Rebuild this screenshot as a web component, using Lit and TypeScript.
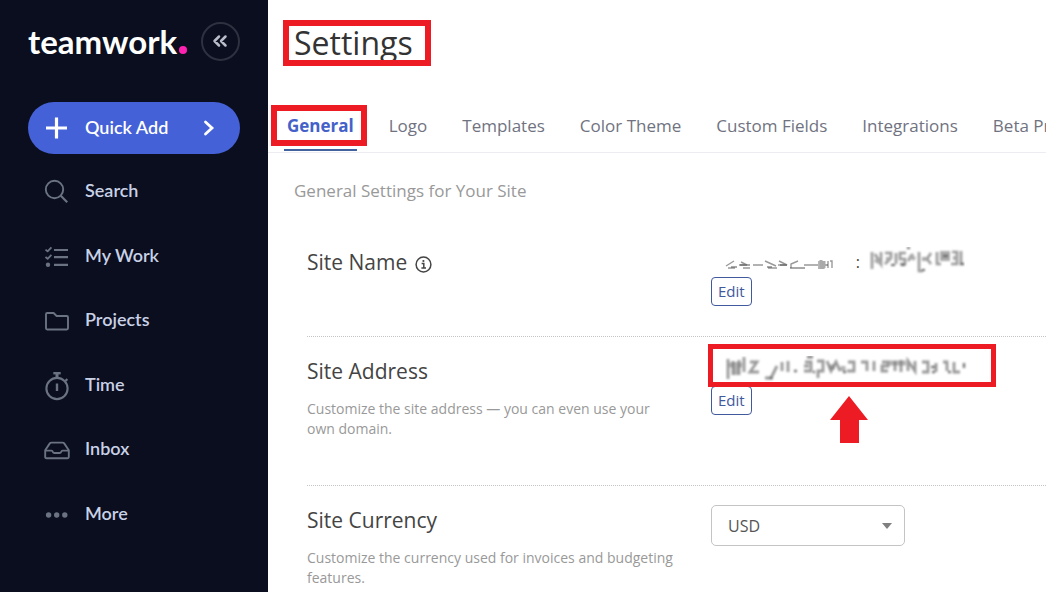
import { LitElement, html, css, svg, nothing, type TemplateResult } from "lit";
import { customElement, property, state } from "lit/decorators.js";
import { classMap } from "lit/directives/class-map.js";

const icons: Record<string, TemplateResult> = {
  search: svg`<circle cx="10.5" cy="10.5" r="8.7"/><path d="M16.8 16.8 23.2 23.2" stroke-width="2.2"/>`,
  work: svg`<path d="M1.5 5.6 3.6 7.4 7.4 3.4M1.5 13 3.6 14.8 7.4 10.8" stroke-width="1.8"/>
    <path d="M10 6H24M10 13.2H24M10 20.8H24" stroke-width="2.2"/>
    <circle cx="4" cy="20.8" r="2.2" fill="currentColor" stroke="none"/>`,
  projects: svg`<path d="M3.2 5H9.6L12.6 8H22.8Q24 8 24 9.2V20.3Q24 21.5 22.8 21.5H3.2Q2 21.5 2 20.3V6.2Q2 5 3.2 5Z"/>`,
  time: svg`<circle cx="13" cy="15.500" r="10.6" stroke-width="2.1"/><path d="M13 10.500V18" stroke-width="2.4"/>
    <path d="M9.3 .2H16.7" stroke-width="2.4"/><path d="M13 .5V5" stroke-width="3"/><path d="M21.3 8 23.4 6.2" stroke-width="2.2"/>`,
  inbox: svg`<path d="M1.2 13.2 5.8 6.4Q6.4 5.6 7.4 5.6H18.6Q19.6 5.6 20.2 6.4L24.8 13.2V20Q24.8 21.2 23.6 21.2H2.4Q1.2 21.2 1.2 20Z"/>
    <path d="M1.4 13.6H7.4Q8.4 13.6 8.7 14.6 9 16 10.2 16H15.8Q17 16 17.3 14.6 17.6 13.6 18.6 13.6H24.6"/>`,
  more: svg`<g fill="currentColor" stroke="none"><circle cx="4.6" cy="13" r="2.7"/><circle cx="12.7" cy="13" r="2.7"/><circle cx="20.8" cy="13" r="2.7"/></g>`,
};

@customElement("side-bar")
export class SideBar extends LitElement {
  static styles = css`
    :host {
      display: block;
      background: #0a0e1e;
      padding: 22px 28px 24px;
      font-family: Lato, "Open Sans", sans-serif;
      box-sizing: border-box;
    }
    .brand { display: flex; align-items: center; justify-content: space-between; height: 38px; }
    .logo { display: flex; align-items: baseline; color: #fff; font-size: 33px; line-height: 38px; font-weight: 700; text-decoration: none; }
    .dot { width: 8px; height: 8px; border-radius: 50%; background: #ff22b1; margin-left: 2px; }
    .toggle { width: 39px; height: 39px; border-radius: 50%; border: 2px solid #2d3140; background: none; color: #b9bdc9; padding: 0 2px 0 0; display: grid; place-items: center; }
    .add {
      display: flex; align-items: center; width: 100%; height: 52px; margin: 42px 0 5px; padding: 0 24px 0 17px;
      border: 0; border-radius: 26px; background: #4461d7; color: #fff; font: 600 18px/24px Lato, sans-serif; text-align: left;
    }
    .label { flex: 1; margin-left: 17px; padding-bottom: 2px; }
    ul { display: grid; grid-auto-rows: 1fr; height: 387px; list-style: none; margin: 0; padding: 0 0 0 16px; }
    .item { display: flex; align-items: center; gap: 15px; height: 100%; color: #c9d1e6; font-size: 18px; line-height: 24px; font-weight: 600; text-decoration: none; }
    .text { padding-bottom: 2px; }
    .icon { width: 26px; height: 28px; overflow: visible; color: #6b7282; fill: none; stroke: currentColor; stroke-width: 1.9; stroke-linejoin: round; }
  `;

  private items = [
    ["search", "Search"],
    ["work", "My Work"],
    ["projects", "Projects"],
    ["time", "Time"],
    ["inbox", "Inbox"],
    ["more", "More"],
  ];

  render() {
    return html`
      <div class="brand">
        <a class="logo" href="#home">teamwork<span class="dot"></span></a>
        <button class="toggle" aria-label="Collapse sidebar">
          <svg width="16" height="14" viewBox="0 0 16 14" fill="none" stroke="currentColor" stroke-width="2.5" stroke-linecap="round" stroke-linejoin="round"><path d="M7 2.500 2.500 7 7 11.500M13.500 2.500 9 7 13.500 11.500"/></svg>
        </button>
      </div>
      <button class="add">
        <svg width="23" height="22" viewBox="0 0 23 22" fill="none" stroke="#fff" stroke-width="3.2"><path d="M11.5 .5V21.5M1 11H22"/></svg>
        <span class="label">Quick Add</span>
        <svg width="14" height="16" viewBox="0 0 14 16" fill="none" stroke="#fff" stroke-width="2.8" stroke-linecap="round"><path d="M3.5 2 10 8 3.5 14"/></svg>
      </button>
      <nav aria-label="Main">
        <ul>
          ${this.items.map(([id, label]) => html`<li><a class="item" href="#${id}"><svg class="icon" viewBox="0 -2 26 28">${icons[id]}</svg><span class="text">${label}</span></a></li>`)}
        </ul>
      </nav>
    `;
  }
}

@customElement("setting-row")
export class SettingRow extends LitElement {
  @property() heading = "";
  @property() description = "";
  @property({ type: Boolean }) info = false;

  static styles = css`
    :host { display: grid; grid-template-columns: 404px 1fr; padding: 19px 0 30px; border-bottom: 1px dotted #c4c4c4; }
    :host(:last-of-type) { padding-bottom: 0; border-bottom: 0; }
    :host(:last-of-type) .desc { margin-bottom: 0; }
    .title { display: flex; align-items: center; gap: 8px; margin: 0; font-size: 21px; line-height: 30px; font-weight: 400; color: #444; }
    .info { margin-top: 4px; }
    .desc { margin: 13px 36px 16px 0; font-size: 14px; line-height: 20px; color: #999; }
  `;

  render() {
    return html`
      <div>
        <h2 class="title">${this.heading}
          ${this.info
            ? html`<svg class="info" width="17" height="17" viewBox="0 0 17 17" fill="none" stroke="#444" stroke-width="1.5" role="img" aria-label="More information"><circle cx="8.5" cy="8.5" r="7.4"/><path d="M6.6 7.6H8.8V12M6.4 12.1H11" /><circle cx="8.4" cy="5" r="1.1" fill="#444" stroke="none"/></svg>`
            : nothing}
        </h2>
        ${this.description ? html`<p class="desc">${this.description}</p>` : nothing}
      </div>
      <div><slot></slot></div>
    `;
  }
}

@customElement("app-root")
export class AppRoot extends LitElement {
  @state() private active = "General";
  private tabs = ["General", "Logo", "Templates", "Color Theme", "Custom Fields", "Integrations", "Beta Programs"];

  static styles = css`
    :host { display: grid; grid-template-columns: 268px minmax(0, 1fr); min-height: 100vh; background: #fff; font-family: "Open Sans", "Noto Sans", sans-serif; color: #444; }
    main { overflow: hidden; }
    header { padding: 20px 15px 0; }
    .page-title { display: inline-block; margin: 0; padding: 0 18px 0 11px; font-size: 32px; line-height: 46px; font-weight: 500; color: #333; position: relative; }
    .mark::after { content: ""; position: absolute; inset: 0; border: 6px solid #ed1c24; pointer-events: none; }
    .tabs { display: flex; gap: 29px; margin-top: 33px; padding: 0 16px; border-bottom: 1px solid #ececf1; }
    .tab { position: relative; flex: none; padding: 15px 3px 11px; border-bottom: 2px solid transparent; margin-bottom: 1px; font-size: 17px; line-height: 24px; color: #70737f; text-decoration: none; }
    .current { font-weight: 700; color: #4461c9; border-bottom-color: #42619f; }
    .current::after { inset: 6px -10px 3px -13px; }
    .intro { margin: 26px 26px 25px; font-size: 17px; line-height: 24px; color: #999; }
    .rows { margin-left: 39px; }
    .value { display: flex; align-items: center; height: 30px; padding-left: 14px; font-size: 16px; }
    .colon { width: 25px; padding-right: 9px; text-align: right; }
    .address { position: relative; width: fit-content; padding-right: 17px; }
    .address::after { content: ""; position: absolute; inset: -12px -6px -1px -3px; border: 5px solid #ed1c24; pointer-events: none; }
    .arrow { position: absolute; top: 40px; left: 119px; z-index: 1; }
    .edit { display: block; height: 29px; padding: 0 6px 2px; border: 1px solid #41599d; border-radius: 4px; background: #fff; color: #41599d; font: 400 15px/20px "Open Sans", sans-serif; }
    .select { display: grid; align-items: center; width: 194px; }
    .select select { grid-area: 1 / 1; appearance: none; width: 100%; height: 41px; padding: 0 16px; border: 1px solid #c4c4c4; border-radius: 5px; background: #fff; color: #555; font: 400 16px/24px "Open Sans", sans-serif; }
    .caret { grid-area: 1 / 1; justify-self: end; margin-right: 13px; pointer-events: none; }
  `;

  private firstName = html`<svg width="110" height="30" viewBox="0 0 110 30" role="img" aria-label="Hidden" fill="none" stroke="#999" stroke-width="1.4">
    <g filter="blur(.6px)"><path d="M1 19 9 14M3 21H10M16 15 22 18H14M18 21H25M28 18H38M40 14 51 19M43 21H52M54 14 62 18H53M66 21V17L73 14M79 18H93M94 14V22M103 14V21M105 14H107V21"/>
    <path d="M65 21H80M15 18H25M95 15H99V21H95M55 18H62M96 18H103M6 20H12M42 20H47" stroke="#555" stroke-width="1.2"/>
    <path d="M96 13V22M99 14V21" stroke-width="3" stroke="#aaa"/></g></svg>`;

  private lastName = html`<svg width="96" height="30" viewBox="0 0 96 30" role="img" aria-label="Hidden" fill="none" stroke="#999" stroke-width="2.6">
    <g filter="blur(.9px)"><path d="M3 5V22M6 7 12 17V5M16 6H22V11L16 17M27 6V17M37 6H31V12H36V17H31M39 14 44 7M50 5V24H54M62 6 58 12 62 17M68 5V17H72M83 5H88V17H82M92 4V17H95"/>
    <path d="M17 12H22M40 9 46 12M53 12H58M73 6H79V12H73ZM84 11H88M6 13 12 16" stroke="#aaa" stroke-width="4"/>
    <path d="M38 1H41M22 18H26M32 18H36M53 23H56M74 9H79M91 17H95" stroke="#666" stroke-width="2"/></g></svg>`;

  private siteAddress = html`<svg width="248" height="30" viewBox="0 0 248 30" role="img" aria-label="Hidden" fill="none" stroke="#999" stroke-width="2.8">
    <g filter="blur(1px)"><path d="M3 3V23M8 5V19M14 4V19M19 1V16M25 6H32L25 16H34M40 22H46L52 10M57 6V15M63 5V16M80 6H86V15H79M84 10H79M92 5H98V15H93V22M102 5 106 15 111 6 115 15M123 6H129V15H122M136 6H142V15M149 5V15M157 6H163V10H157V15H163M170 5V15M176 4V16M183 15V5L190 15V5M197 6H203V16H197M211 7V16M218 6H222V15M229 6V16H235"/>
    <path d="M4 9H17M11 6V19M164 7H181M118 10V15M104 11H110" stroke="#777" stroke-width="5" opacity=".55"/>
    <path d="M82 1H88M69 15H72M88 16H90M118 16H121M206 11H210M207 16H210M223 16H226M239 7V12M44 22H48" stroke="#777" stroke-width="2.4"/></g></svg>`;

  private select(e: Event, tab: string) {
    e.preventDefault();
    this.active = tab;
  }

  render() {
    return html`
      <side-bar></side-bar>
      <main>
        <header><h1 class="page-title mark">Settings</h1></header>
        <nav class="tabs" aria-label="Settings sections">
          ${this.tabs.map((t) => html`<a href="#" class=${classMap({ tab: true, current: t === this.active, mark: t === this.active })} @click=${(e: Event) => this.select(e, t)}>${t}</a>`)}
        </nav>
        <p class="intro">General Settings for Your Site</p>
        <div class="rows">
          <setting-row heading="Site Name" info>
            <div class="value">${this.firstName}<span class="colon">:</span>${this.lastName}</div>
            <button class="edit" aria-label="Edit site name">Edit</button>
          </setting-row>
          <setting-row heading="Site Address" description="Customize the site address — you can even use your own domain.">
            <div class="value address">${this.siteAddress}
              <svg class="arrow" width="38" height="47" viewBox="0 0 38 47" fill="#ed1c24" aria-hidden="true"><path d="M19 0 38 24H29V47H10V24H0Z"/></svg>
            </div>
            <button class="edit" aria-label="Edit site address">Edit</button>
          </setting-row>
          <setting-row heading="Site Currency" description="Customize the currency used for invoices and budgeting features.">
            <div class="select">
              <select aria-label="Site Currency"><option>USD</option><option>EUR</option><option>GBP</option></select>
              <svg class="caret" width="10" height="6" viewBox="0 0 10 6" fill="#808080" aria-hidden="true"><path d="M0 0H10L5 6Z"/></svg>
            </div>
          </setting-row>
        </div>
      </main>
    `;
  }
}
